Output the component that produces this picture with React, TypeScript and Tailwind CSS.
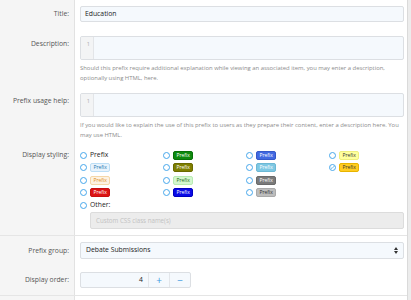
import { Check } from 'lucide-react';

const badges: { cls: string; checked?: boolean; plain?: boolean }[][] = [
    [
        { cls: '', plain: true },
        { cls: 'bg-[#e8f3fc] text-[#2577b1] border-[#bcdef5]' },
        { cls: 'bg-[#fdf2e2] text-[#e08f1c] border-[#f5d7a8]' },
        { cls: 'bg-[#dc1414] text-white border-[#c81010]' },
    ],
    [
        { cls: 'bg-[#0e8a0e] text-white border-[#087008]' },
        { cls: 'bg-[#7f7f00] text-white border-[#6a6a00]' },
        { cls: 'bg-[#d4f7cf] text-[#1f6b1a] border-[#b8ecb2]' },
        { cls: 'bg-[#0a0ae6] text-white border-[#0000c0]' },
    ],
    [
        { cls: 'bg-[#4169e1] text-white border-[#3558c8]' },
        { cls: 'bg-[#7ec8e3] text-white border-[#6cb8d4]' },
        { cls: 'bg-[#7a7a7a] text-white border-[#6a6a6a]' },
        { cls: 'bg-[#bdbdbd] text-[#333] border-[#aaaaaa]' },
    ],
    [
        { cls: 'bg-[#ffff9e] text-[#333] border-[#efef80]' },
        { cls: 'bg-[#ffcc22] text-[#333] border-[#e8b400]', checked: true },
    ],
];

function Radio({ checked }: { checked?: boolean }) {
    return (
        <span className="w-[7px] h-[7px] rounded-full border border-[#47a7eb] bg-white flex items-center justify-center shrink-0">
            {checked && <Check className="w-[5px] h-[5px] text-[#47a7eb]" strokeWidth={4} />}
        </span>
    );
}

function Label({ children, h }: { children: React.ReactNode; h: string }) {
    return (
        <div className={`w-[75px] shrink-0 bg-[#f5f5f5] border-r border-[#e2e2e2] text-right pr-[5px] text-[#555] text-[6.8px] ${h}`}>
            {children}
        </div>
    );
}

function CodeArea() {
    return (
        <div className="h-[24px] flex border border-[#dcdfe3] rounded-[2px] bg-[#f5f9fd] overflow-hidden">
            <div className="w-[13px] bg-[#f3f4f5] border-r border-[#e3e5e8] text-[5.5px] text-[#aaa] text-right pr-[3px] pt-[3px]">1</div>
            <div className="flex-1" />
        </div>
    );
}

export default function App() {
    return (
        <div className="w-[411px] h-[300px] bg-[#ececec] overflow-hidden font-['Open_Sans',sans-serif]">
            <div className="w-[408px] h-[300px] bg-white border-r border-[#dadada] flex flex-col">
                {/* Title */}
                <div className="flex">
                    <Label h="pt-[6px] pb-[7px] leading-[16px]">Title:</Label>
                    <div className="flex-1 min-w-0 pl-[5px] pr-[3px] pt-[6px] pb-[7px]">
                        <div className="h-[16px] border border-[#dcdfe3] rounded-[2px] bg-[#f5f9fd] px-[4px] text-[6.8px] leading-[14px] text-[#222]">Education</div>
                    </div>
                </div>

                {/* Description */}
                <div className="flex">
                    <Label h="pt-[7px] leading-[16px]">Description:</Label>
                    <div className="flex-1 min-w-0 pl-[5px] pr-[3px] pt-[7px] pb-[3px]">
                        <CodeArea />
                        <p className="mt-[3px] text-[5.9px] leading-[10px] text-[#8c8c8c]">
                            Should this prefix require additional explanation while viewing an associated item, you may enter a description, optionally using HTML, here.
                        </p>
                    </div>
                </div>

                {/* Prefix usage help */}
                <div className="flex">
                    <Label h="pt-[7px] leading-[16px]">Prefix usage help:</Label>
                    <div className="flex-1 min-w-0 pl-[5px] pr-[3px] pt-[7px] pb-[6px]">
                        <CodeArea />
                        <p className="mt-[3px] text-[5.9px] leading-[10px] text-[#8c8c8c]">
                            If you would like to explain the use of this prefix to users as they prepare their content, enter a description here. You may use HTML.
                        </p>
                    </div>
                </div>

                {/* Display styling */}
                <div className="flex border-b border-[#e5e5e5]">
                    <Label h="pt-[3px] leading-[12.5px]">Display styling:</Label>
                    <div className="flex-1 min-w-0 pl-[5px] pr-[3px] pt-[3px] pb-[6px]">
                        <div className="grid grid-cols-[83px_83px_83px_minmax(0,1fr)]">
                            {badges.map((col, ci) => (
                                <div key={ci} className="flex flex-col">
                                    {col.map((b, bi) => (
                                        <div key={bi} className="h-[12.5px] flex items-center gap-[3px]">
                                            <Radio checked={b.checked} />
                                            {b.plain ? (
                                                <span className="text-[6.8px] text-[#222]">Prefix</span>
                                            ) : (
                                                <span className={`h-[9px] px-[2.5px] rounded-[2px] border text-[5px] leading-[7px] flex items-center ${b.cls}`}>Prefix</span>
                                            )}
                                        </div>
                                    ))}
                                </div>
                            ))}
                        </div>
                        <div className="h-[12px] flex items-center gap-[3px]">
                            <Radio />
                            <span className="text-[6.8px] text-[#222]">Other:</span>
                        </div>
                        <div className="ml-[10px] mt-[1px] h-[17px] border border-[#dcdcdc] rounded-[2px] bg-[#ececec] px-[5px] text-[6.2px] leading-[15px] text-[#c2c2c2]">
                            Custom CSS class name(s)
                        </div>
                    </div>
                </div>

                {/* Prefix group */}
                <div className="flex">
                    <Label h="pt-[6px] pb-[7px] leading-[17px]">Prefix group:</Label>
                    <div className="flex-1 min-w-0 pl-[5px] pr-[3px] pt-[6px] pb-[7px]">
                        <div className="h-[17px] border border-[#dcdfe3] rounded-[2px] bg-[#f5f9fd] px-[5px] flex items-center justify-between text-[6.8px] text-[#222]">
                            <span>Debate Submissions</span>
                            <svg width="4" height="7" viewBox="0 0 4 7" className="text-[#333]">
                                <path d="M0 3 L2 0 L4 3 Z M0 4 L2 7 L4 4 Z" fill="currentColor" />
                            </svg>
                        </div>
                    </div>
                </div>

                {/* Display order */}
                <div className="flex border-b border-[#e5e5e5]">
                    <Label h="pt-[6px] pb-[7px] leading-[16px]">Display order:</Label>
                    <div className="flex-1 min-w-0 pl-[5px] pr-[3px] pt-[6px] pb-[7px]">
                        <div className="w-[111px] h-[16px] border border-[#dcdfe3] rounded-[2px] bg-[#f5f9fd] flex text-[6.8px] text-[#222]">
                            <div className="flex-1 text-right pr-[5px] leading-[14px]">4</div>
                            <div className="w-[21px] border-l border-[#e3e6ea] flex items-center justify-center text-[#3c9be0] text-[10px] leading-none">+</div>
                            <div className="w-[21px] border-l border-[#e3e6ea] flex items-center justify-center text-[#3c9be0] text-[10px] leading-none">−</div>
                        </div>
                    </div>
                </div>
                <div className="flex-1 flex">
                    <div className="w-[75px] bg-[#f5f5f5] border-r border-[#e2e2e2]" />
                </div>
            </div>
        </div>
    );
}
